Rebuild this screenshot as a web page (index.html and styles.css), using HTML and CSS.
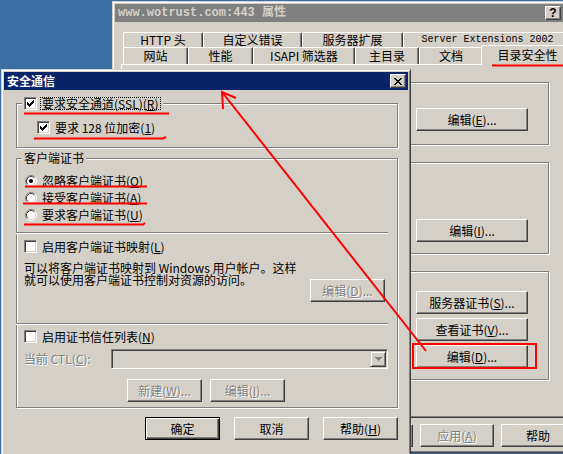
FILE: index.html
```html
<!DOCTYPE html>
<html lang="zh-CN">
<head>
<meta charset="utf-8">
<title>安全通信</title>
<link rel="stylesheet" href="styles.css">
</head>
<body>
<svg class="defs" width="0" height="0" aria-hidden="true">
  <defs>
    <symbol id="check" viewBox="0 0 9 9">
      <path d="M1 3h1v3H1zM2 4h1v3H2zM3 5h1v3H3zM4 4h1v3H4zM5 3h1v3H5zM6 2h1v3H6zM7 1h1v3H7z" fill="#000"/>
    </symbol>
    <symbol id="radio" viewBox="0 0 12 12">
      <circle cx="6" cy="6" r="5" fill="#fff"/>
      <path d="M2.11 9.89A5.5 5.5 0 0 1 9.89 2.11" fill="none" stroke="#808080"/>
      <path d="M9.89 2.11A5.5 5.5 0 0 1 2.11 9.89" fill="none" stroke="#fff"/>
      <path d="M2.82 9.18A4.5 4.5 0 0 1 9.18 2.82" fill="none" stroke="#404040"/>
      <path d="M9.18 2.82A4.5 4.5 0 0 1 2.82 9.18" fill="none" stroke="#d4d0c8"/>
    </symbol>
    <symbol id="close" viewBox="0 0 8 7">
      <path d="M0 0h2v1H0zM6 0h2v1H6zM1 1h2v1H1zM5 1h2v1H5zM2 2h4v1H2zM3 3h2v1H3zM2 4h4v1H2zM1 5h2v1H1zM5 5h2v1H5zM0 6h2v1H0zM6 6h2v1H6z" fill="#000"/>
    </symbol>
  </defs>
</svg>

<div class="win props">
  <div class="titlebar">
    <span class="title title-mono">www.wotrust.com:443 属性</span>
    <span class="caps">
      <span class="capbtn">?</span>
      <span class="capbtn"><svg class="xglyph" width="8" height="7"><use href="#close"/></svg></span>
    </span>
  </div>
  <div class="sheet">
    <div class="tabrow back">
      <span class="tab">HTTP 头</span>
      <span class="tab">自定义错误</span>
      <span class="tab">服务器扩展</span>
      <span class="tab mono">Server Extensions 2002</span>
    </div>
    <div class="tabrow front">
      <span class="tab">网站</span>
      <span class="tab">性能</span>
      <span class="tab">ISAPI 筛选器</span>
      <span class="tab">主目录</span>
      <span class="tab">文档</span>
      <span class="tab sel">目录安全性</span>
    </div>
    <div class="panel">
      <div class="grp pg pg1">
        <span class="btn w112">编辑(<u>E</u>)...</span>
      </div>
      <div class="grp pg pg2">
        <span class="btn w112">编辑(<u>I</u>)...</span>
      </div>
      <div class="grp pg pg3">
        <span class="btn w112">服务器证书(<u>S</u>)...</span>
        <span class="btn w112">查看证书(<u>V</u>)...</span>
        <span class="btn w112">编辑(<u>D</u>)...</span>
      </div>
    </div>
    <div class="pactions">
      <span class="btn w74">确定</span>
      <span class="btn w74">取消</span>
      <span class="btn w74 dis">应用(<u>A</u>)</span>
      <span class="btn w74">帮助</span>
    </div>
  </div>
</div>

<div class="win dlg">
  <div class="titlebar">
    <span class="title">安全通信</span>
    <span class="caps">
      <span class="capbtn"><svg class="xglyph" width="8" height="7"><use href="#close"/></svg></span>
    </span>
  </div>
  <div class="dbody">
    <div class="grp ssl">
      <div class="legend">
        <span class="cb"><svg width="9" height="9"><use href="#check"/></svg></span>
        <span class="focus">要求安全通道(SSL)(<u>R</u>)</span>
      </div>
      <div class="row">
        <span class="cb"><svg width="9" height="9"><use href="#check"/></svg></span>
        <span>要求 128 位加密(<u>1</u>)</span>
      </div>
    </div>

    <div class="grp client">
      <div class="legend">客户端证书</div>
      <div class="radios">
        <div class="rrow">
          <svg class="radio" width="12" height="12" viewBox="0 0 12 12"><use href="#radio"/><circle cx="6" cy="6" r="2" fill="#000"/></svg>
          <span>忽略客户端证书(<u>O</u>)</span>
        </div>
        <div class="rrow">
          <svg class="radio" width="12" height="12" viewBox="0 0 12 12"><use href="#radio"/></svg>
          <span>接受客户端证书(<u>A</u>)</span>
        </div>
        <div class="rrow">
          <svg class="radio" width="12" height="12" viewBox="0 0 12 12"><use href="#radio"/></svg>
          <span>要求客户端证书(<u>U</u>)</span>
        </div>
      </div>
      <div class="sep s1"></div>
      <div class="sec">
        <div class="row r2">
          <span class="cb"></span>
          <span>启用客户端证书映射(<u>L</u>)</span>
        </div>
        <div class="maprow">
          <p class="note">可以将客户端证书映射到 Windows 用户帐户。这样<br>就可以使用客户端证书控制对资源的访问。</p>
          <span class="btn w75 dis mapbtn">编辑(<u>D</u>)...</span>
        </div>
      </div>
      <div class="sep s2"></div>
      <div class="sec">
        <div class="row r3">
          <span class="cb"></span>
          <span>启用证书信任列表(<u>N</u>)</span>
        </div>
        <div class="ctlrow">
          <span class="dis">当前 CTL(<u>C</u>):</span>
          <span class="combo"><span class="drop"><svg width="7" height="5" viewBox="0 0 7 5"><path d="M1 1h5v1H1zM2 2h3v1H2zM3 3h1v1H3z" fill="#fff"/><path d="M0 0h7v1H0zM1 1h5v1H1zM2 2h3v1H2zM3 3h1v1H3z" fill="#808080"/></svg></span></span>
        </div>
        <div class="ctlbtns">
          <span class="btn w75 dis">新建(<u>W</u>)...</span>
          <span class="btn w75 dis">编辑(<u>I</u>)...</span>
        </div>
      </div>
    </div>

    <div class="dactions">
      <span class="btn w75 def">确定</span>
      <span class="btn w75">取消</span>
      <span class="btn w75">帮助(<u>H</u>)</span>
    </div>
  </div>
</div>

<svg class="annot" width="563" height="454" viewBox="0 0 563 454" aria-hidden="true">
  <g stroke="#f00" stroke-width="2" fill="none">
    <path d="M492 65.5H563"/>
    <path d="M24 113.5H169"/>
    <path d="M34 138.5H163L166 137"/>
    <path d="M25 186.5H147"/>
    <path d="M23 203.5H147"/>
    <path d="M24 224.5H143L145 223"/>
    <rect x="413" y="344" width="123" height="24"/>
    <path d="M426 351L222 92"/>
    <path d="M236 98L222 92L223 109"/>
  </g>
</svg>
</body>
</html>
```

FILE: styles.css
```css
* { box-sizing: border-box; }
html, body { margin: 0; padding: 0; }
body {
  width: 563px;
  height: 454px;
  overflow: hidden;
  position: relative;
  background: #3a6ea5;
  font-family: "Noto Sans CJK SC", "Noto Sans", sans-serif;
  font-size: 12px;
  line-height: 14px;
  color: #000;
}
u { text-decoration: underline; text-underline-offset: 1px; }
.defs { position: absolute; width: 0; height: 0; overflow: hidden; }

/* windows */
.win {
  position: absolute;
  background: #d4d0c8;
  border: 1px solid;
  border-color: #d4d0c8 #404040 #404040 #d4d0c8;
  box-shadow: inset 1px 1px #fff, inset -1px -1px #808080;
  padding: 2px;
  display: flex;
  flex-direction: column;
}
.props { left: 112px; top: 1px; width: 472px; height: 452px; }
.dlg { left: 1px; top: 69px; width: 410px; height: 400px; z-index: 2; }

.titlebar {
  height: 18px;
  flex: none;
  display: flex;
  align-items: center;
  justify-content: space-between;
  padding: 0 2px;
  font-weight: bold;
  white-space: nowrap;
}
.props .titlebar { background: #808080; color: #d4d0c8; }
.dlg .titlebar { background: #0a246a; color: #fff; }
.title { padding-left: 1px; }
.title-mono { font-family: "Liberation Mono", "Noto Sans CJK SC", monospace; font-size: 12px; }
.caps { display: flex; gap: 2px; }
.capbtn {
  width: 16px;
  height: 14px;
  background: #d4d0c8;
  border: 1px solid;
  border-color: #fff #404040 #404040 #fff;
  box-shadow: inset -1px -1px #808080;
  display: flex;
  align-items: center;
  justify-content: center;
  color: #000;
  font: bold 12px/12px "Liberation Sans", sans-serif;
}
.xglyph { display: block; }

/* property sheet */
.sheet { flex: 1; padding: 10px 6px 0; display: flex; flex-direction: column; }
.tabrow { display: flex; padding-left: 2px; flex: none; }
.tab {
  flex: none;
  border: 1px solid;
  border-bottom: 0;
  border-color: #fff #404040 #fff #fff;
  box-shadow: inset -1px 0 #808080;
  border-radius: 2px 2px 0 0;
  text-align: center;
  white-space: nowrap;
  background: #d4d0c8;
}
.back .tab { height: 15px; line-height: 14px; }
.front .tab { height: 17px; line-height: 16px; }
.back .tab:nth-child(1) { width: 80px; }
.back .tab:nth-child(2) { width: 99px; }
.back .tab:nth-child(3) { width: 101px; }
.back .tab:nth-child(4) { width: 169px; }
.front .tab:nth-child(1) { width: 65px; }
.front .tab:nth-child(2) { width: 65px; }
.front .tab:nth-child(3) { width: 102px; }
.front .tab:nth-child(4) { width: 64px; }
.front .tab:nth-child(5) { width: 64px; }
.front .tab.sel {
  width: 93px;
  height: 20px;
  margin: -2px -2px -1px;
  position: relative;
  z-index: 1;
  line-height: 17px;
}
.mono { font-family: "Liberation Mono", monospace; font-size: 10px; }

.panel {
  height: 354px;
  flex: none;
  border: 1px solid;
  border-color: #fff #404040 #404040 #fff;
  box-shadow: inset -1px -1px #808080;
  padding: 17px 25px 0 9px;
  display: flex;
  flex-direction: column;
  gap: 17px;
}

.grp {
  position: relative;
  flex: none;
  border: 1px solid #808080;
  box-shadow: inset 1px 1px #fff, 1px 1px #fff;
}
.pg { display: flex; flex-direction: column; align-items: flex-end; padding-right: 20px; gap: 4px; }
.pg1 { height: 63px; padding-top: 25px; }
.pg2 { height: 92px; padding-top: 56px; }
.pg3 { height: 109px; padding-top: 19px; }

.pactions { display: flex; justify-content: flex-end; gap: 7px; margin-top: 6px; }

/* buttons */
.btn {
  flex: none;
  display: flex;
  align-items: center;
  justify-content: center;
  height: 23px;
  background: #d4d0c8;
  border: 1px solid;
  border-color: #fff #404040 #404040 #fff;
  box-shadow: inset -1px -1px #808080;
  white-space: nowrap;
}
.w112 { width: 112px; }
.w74 { width: 74px; }
.w75 { width: 75px; }
.btn.def {
  border-color: #000;
  box-shadow: inset 1px 1px #fff, inset -1px -1px #404040, inset -2px -2px #808080;
}
.dis { color: #808080; text-shadow: 1px 1px 0 #fff; }

/* dialog */
.dbody { flex: 1; padding: 13px 10px 0 12px; display: flex; flex-direction: column; }
.legend {
  position: absolute;
  top: -8px;
  left: 5px;
  height: 14px;
  padding: 0 2px;
  background: #d4d0c8;
  display: flex;
  align-items: center;
  gap: 5px;
  white-space: nowrap;
}
.focus {
  border: 1px dotted #000;
  padding: 0 1px;
  line-height: 11px;
  margin-left: -2px;
}
.cb {
  flex: none;
  display: block;
  width: 13px;
  height: 13px;
  padding: 1px;
  background: #fff;
  border: 1px solid;
  border-color: #808080 #fff #fff #808080;
  box-shadow: inset 1px 1px #404040, inset -1px -1px #d4d0c8;
}
.cb svg { display: block; }
.row { display: flex; align-items: center; height: 15px; gap: 5px; white-space: nowrap; }

.ssl { height: 45px; padding: 16px 0 0 20px; }
.client { height: 250px; margin-top: 10px; }

.radios { padding: 13px 0 0 8px; }
.rrow { display: flex; align-items: center; height: 17px; gap: 5px; white-space: nowrap; }
.radio { display: block; flex: none; }

.sep { height: 2px; border-top: 1px solid #808080; border-bottom: 1px solid #fff; margin: 0 9px 0 -1px; }
.s1 { margin-top: 9px; }
.s2 { margin-top: 21px; }

.sec { padding-left: 7px; }
.r2 { margin-top: 5px; }
.r3 { margin-top: 4px; }
.maprow { display: flex; justify-content: space-between; align-items: flex-start; margin-top: 8px; }
.note { margin: 0; line-height: 12px; white-space: nowrap; }
.mapbtn { margin-top: 17px; margin-right: 12px; }

.ctlrow { display: flex; align-items: center; justify-content: space-between; margin-top: 5px; height: 20px; }
.combo {
  width: 277px;
  height: 20px;
  margin-right: 9px;
  padding: 1px;
  display: flex;
  justify-content: flex-end;
  background: #d4d0c8;
  border: 1px solid;
  border-color: #808080 #fff #fff #808080;
  box-shadow: inset 1px 1px #404040, inset -1px -1px #d4d0c8;
}
.drop {
  width: 16px;
  height: 16px;
  display: flex;
  align-items: center;
  justify-content: center;
  background: #d4d0c8;
  border: 1px solid;
  border-color: #d4d0c8 #404040 #404040 #d4d0c8;
  box-shadow: inset 1px 1px #fff, inset -1px -1px #808080;
}
.drop svg { display: block; }
.ctlbtns { display: flex; gap: 8px; margin-top: 10px; padding-left: 103px; }

.dactions { display: flex; justify-content: flex-end; gap: 14px; margin-top: 9px; }

.annot { position: absolute; left: 0; top: 0; z-index: 10; pointer-events: none; }
```
